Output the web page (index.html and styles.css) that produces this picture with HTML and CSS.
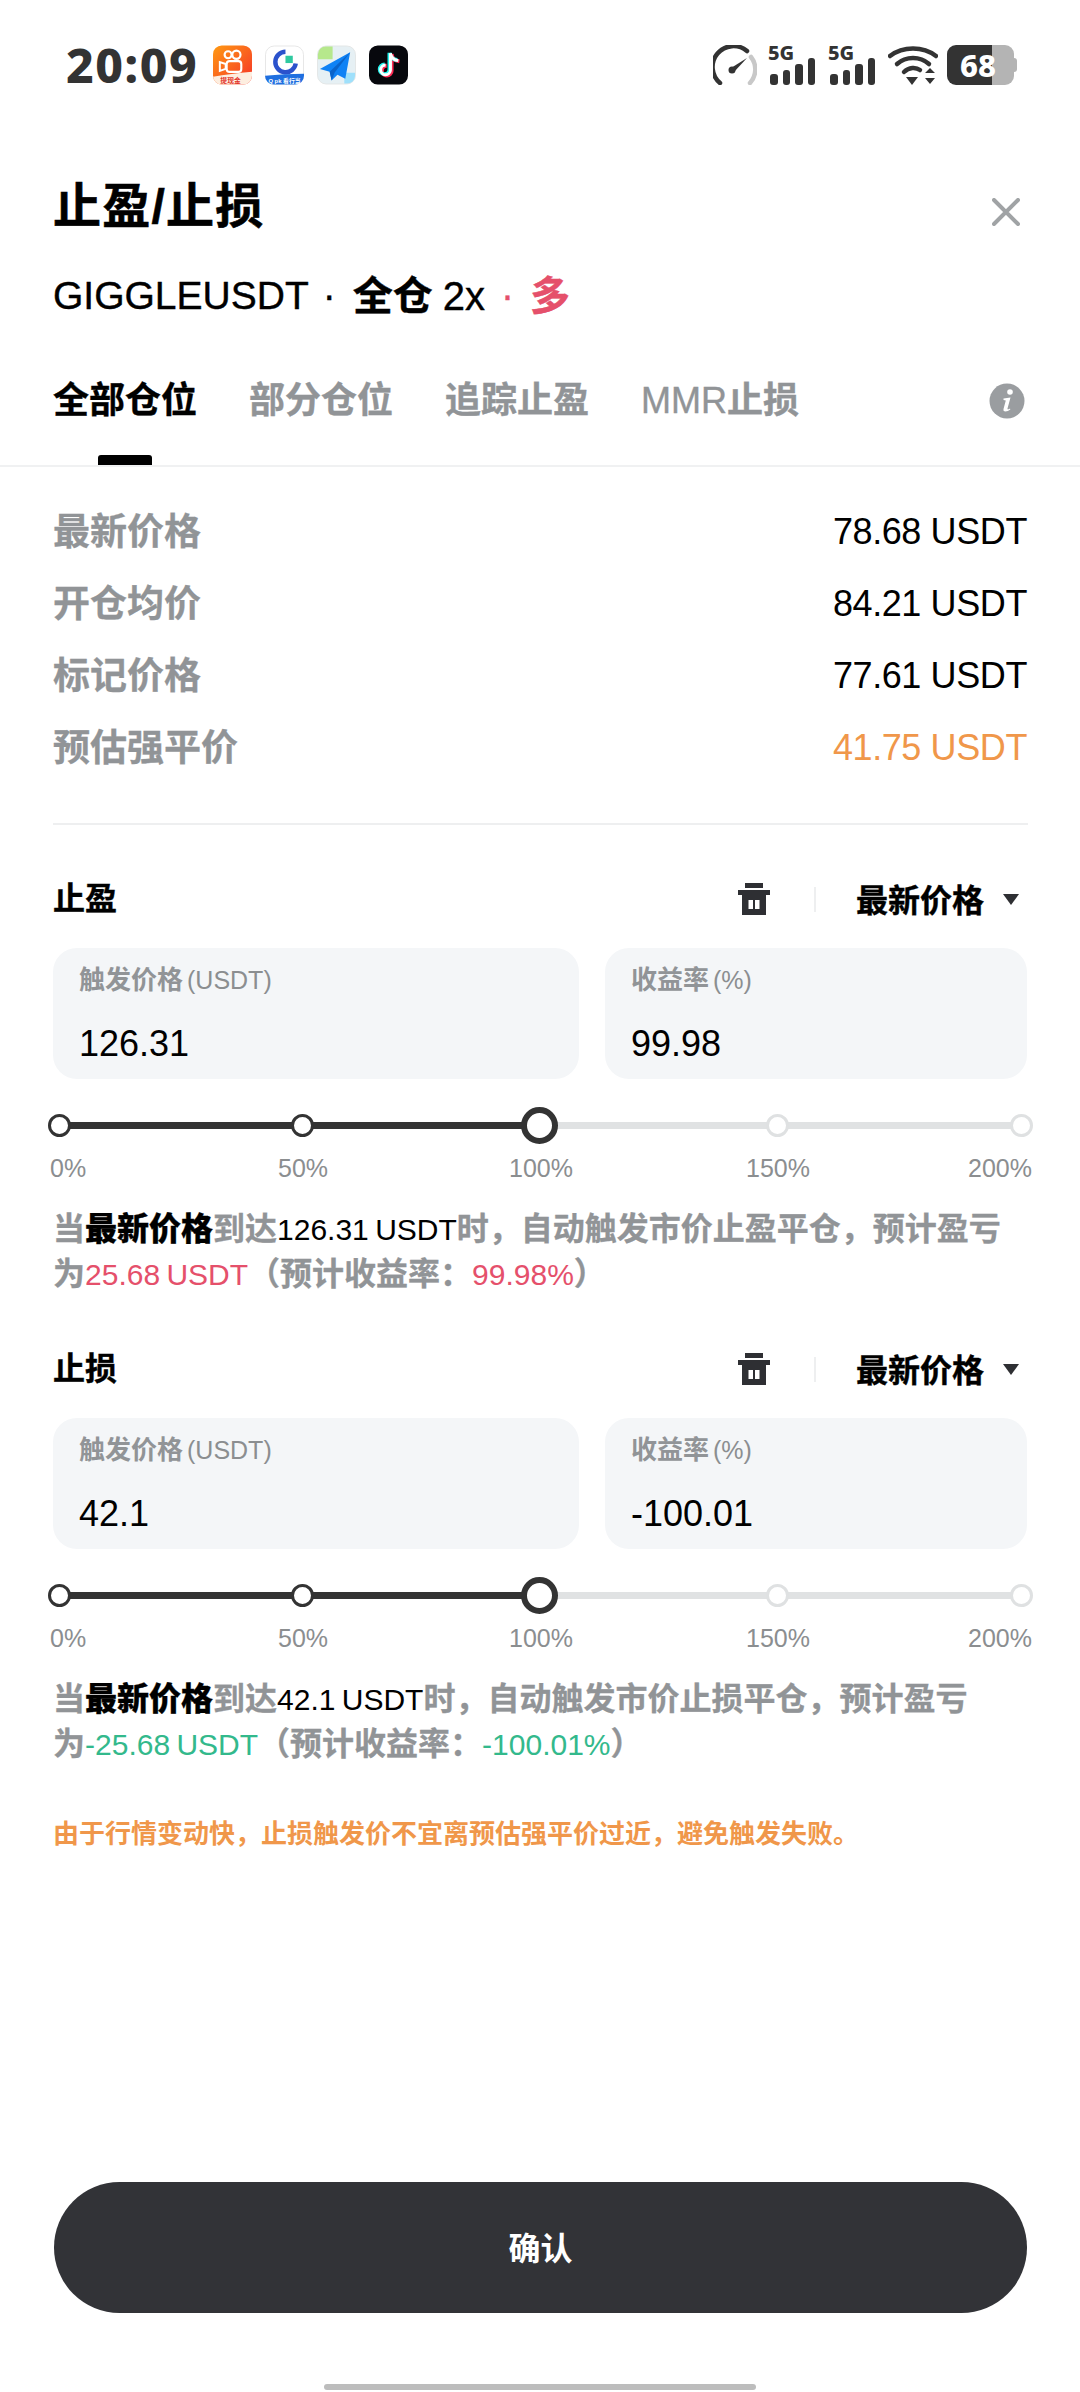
FILE: index.html
```html
<!DOCTYPE html>
<html lang="zh-CN">

<head>
    <meta charset="UTF-8">
    <meta name="viewport" content="width=device-width, initial-scale=1.0">
    <title>止盈/止损</title>
    <link rel="stylesheet" href="styles.css">
</head>

<body>
    <div class="status-bar">
        <div class="status-left">
            <span class="time">20:09</span>
            <svg class="app-icon" viewBox="0 0 40 40">
                <defs>
                    <linearGradient id="ks" x1="0" y1="0" x2="1" y2="1">
                        <stop offset="0" stop-color="#ff9a12" />
                        <stop offset="1" stop-color="#f5302a" />
                    </linearGradient>
                </defs>
                <rect width="40" height="40" rx="9" fill="url(#ks)" />
                <circle cx="15.5" cy="9.5" r="3.6" fill="none" stroke="#fff" stroke-width="2.2" />
                <circle cx="24" cy="9.5" r="4.2" fill="none" stroke="#fff" stroke-width="2.2" />
                <rect x="14" y="16" width="15" height="11" rx="3" fill="none" stroke="#fff" stroke-width="2.2" />
                <path d="M13 19l-6-2v9l6-2z" fill="none" stroke="#fff" stroke-width="2" />
                <path d="M0 32q18 -3 40 -5v4a9 9 0 0 1-9 9H9a9 9 0 0 1-9-9z" fill="#fdeee0" />
                <text x="18" y="38.5" font-size="7" font-weight="700" fill="#e2342a" text-anchor="middle">提现金</text>
            </svg>
            <svg class="app-icon" viewBox="0 0 40 40">
                <rect x=".5" y=".5" width="39" height="39" rx="9" fill="#fff" stroke="#e6e6e6" />
                <path d="M21 6.500a10.500 10.500 0 1 0 10.500 12" fill="none" stroke="#2b52cc" stroke-width="4.600" />
                <rect x="21" y="10.500" width="7.500" height="7.500" fill="#2fc9a0" />
                <path d="M0 31q20 -2 40 -2v2a9 9 0 0 1-9 9H9a9 9 0 0 1-9-9z" fill="#1f6fe0" />
                <text x="20" y="38" font-size="6" font-weight="700" fill="#fff" text-anchor="middle">Q pk 看行当</text>
            </svg>
            <svg class="app-icon" viewBox="0 0 40 40">
                <rect x=".5" y=".5" width="39" height="39" rx="9" fill="#e6f0f4" stroke="#e3e6e6" />
                <path d="M1 9a8 8 0 0 1 8-8h7v13H1z" fill="#b6e88c" />
                <path d="M28 28h11v3a8 8 0 0 1-8 8h-3z" fill="#9fe0fb" />
                <path d="M34 7L3 24l10 3 2 9 6-6 8 4z" fill="#0f82f5" />
                <path d="M34 7L13 27l2 9 3-8z" fill="#0a63c9" />
            </svg>
            <svg class="app-icon" viewBox="0 0 40 40">
                <rect width="40" height="40" rx="9" fill="#07080d" />
                <path d="M22 8v17a5 5 0 1 1-5-5M22 8c.5 4 3.500 7 8 7.500" fill="none" stroke="#ff2c55" stroke-width="4" transform="translate(1.200 .8)" />
                <path d="M22 8v17a5 5 0 1 1-5-5M22 8c.5 4 3.500 7 8 7.500" fill="none" stroke="#25f4ee" stroke-width="4" transform="translate(-1 -.6)" />
                <path d="M22 8v17a5 5 0 1 1-5-5M22 8c.5 4 3.500 7 8 7.500" fill="none" stroke="#fff" stroke-width="3" />
            </svg>
        </div>
        <div class="status-right">
            <svg class="gauge" viewBox="0 0 44 40">
                <path d="M7 38A20 20 0 0 1 34 6" fill="none" stroke="#333" stroke-width="4.500" stroke-linecap="round" />
                <path d="M38 12A20 20 0 0 1 37 38" fill="none" stroke="#c8c8c8" stroke-width="4.500" stroke-linecap="round" />
                <path d="M34 13L21 27l-3-4z" fill="#333" />
                <circle cx="19" cy="25" r="3.500" fill="#333" />
            </svg>
            <div class="signal">
                <span class="signal-label">5G</span>
                <div class="bars"><i class="b1"></i><i class="b2"></i><i class="b3"></i><i class="b4"></i></div>
            </div>
            <div class="signal">
                <span class="signal-label">5G</span>
                <div class="bars"><i class="b1"></i><i class="b2"></i><i class="b3"></i><i class="b4"></i></div>
            </div>
            <svg class="wifi" viewBox="0 0 50 40">
                <path d="M2 11C15 1 35 1 48 11" fill="none" stroke="#333" stroke-width="4.500" stroke-linecap="round" />
                <path d="M9 19C18 11 32 11 41 19" fill="none" stroke="#333" stroke-width="4.500" stroke-linecap="round" />
                <path d="M16 27C21 22 28 22 32 25" fill="none" stroke="#333" stroke-width="4.500" stroke-linecap="round" />
                <path d="M18 32h12l-6 8z" fill="#333" />
                <path d="M37 28l5-5 5 5zM37 33h10l-5 6z" fill="#333" />
            </svg>
            <div class="battery">
                <div class="battery-body"><span>68</span></div>
                <div class="battery-nub"></div>
            </div>
        </div>
    </div>

    <div class="head">
        <div class="title-row">
            <h1>止盈/止损</h1>
            <svg class="close" viewBox="0 0 28 28">
                <path d="M2 2L26 26M26 2L2 26" stroke="#a0a3a5" stroke-width="4" stroke-linecap="round" fill="none" />
            </svg>
        </div>
        <div class="subtitle">
            <span>GIGGLEUSDT</span><span class="dot">·</span><b>全仓</b><span class="lev">2x</span><span class="dot dot-red red">·</span><b class="red">多</b>
        </div>
    </div>

    <div class="tabs">
        <span class="tab active">全部仓位</span>
        <span class="tab">部分仓位</span>
        <span class="tab">追踪止盈</span>
        <span class="tab"><span class="latin">MMR</span>止损</span>
        <svg class="info" viewBox="0 0 36 36">
            <circle cx="18" cy="18" r="17.500" fill="#9a9da0" />
            <circle cx="21" cy="9" r="2.800" fill="#fff" />
            <path d="M14.500 15.500l7-1-3 11c-.3 1 .5 1.300 2.500 0l.3 1c-3 2.500-7.500 3-6.800-.5l2.300-8.500-2.300-.5z" fill="#fff" />
        </svg>
    </div>

    <div class="rows">
        <div class="row"><span class="row-label">最新价格</span><span class="row-value">78.68 USDT</span></div>
        <div class="row"><span class="row-label">开仓均价</span><span class="row-value">84.21 USDT</span></div>
        <div class="row"><span class="row-label">标记价格</span><span class="row-value">77.61 USDT</span></div>
        <div class="row"><span class="row-label">预估强平价</span><span class="row-value orange">41.75 USDT</span></div>
    </div>

    <div class="divider"></div>

    <section class="block">
        <div class="block-head">
            <span class="block-title">止盈</span>
            <svg class="trash" viewBox="0 0 32 32">
                <path d="M7 0h18v5H7zM0 7h32v5H0zM4 12h24v20H4z" fill="#2e2f33" />
                <path d="M10.500 17H15v9h-4.500zM17 17h4.500v9H17z" fill="#fff" />
            </svg>
            <span class="vline"></span>
            <span class="select">最新价格</span>
            <span class="arrow"></span>
        </div>
        <div class="fields">
            <div class="field price">
                <div class="field-label"><b>触发价格</b><span>(USDT)</span></div>
                <div class="field-value">126.31</div>
            </div>
            <div class="field rate">
                <div class="field-label"><b>收益率</b><span>(%)</span></div>
                <div class="field-value">99.98</div>
            </div>
        </div>
        <div class="slider">
            <div class="track"></div>
            <div class="track-on"></div>
            <i class="stop on s0"></i><i class="stop on s50"></i><i class="thumb"></i><i class="stop s150"></i><i class="stop s200"></i>
        </div>
        <div class="ticks"><span>0%</span><span>50%</span><span>100%</span><span>150%</span><span>200%</span></div>
        <p class="note">当<b>最新价格</b>到达<span class="black">126.31 USDT</span>时，自动触发市价止盈平仓，预计盈亏<br>为<span class="red">25.68 USDT</span>（预计收益率：<span class="red">99.98%</span>）</p>
    </section>

    <section class="block">
        <div class="block-head">
            <span class="block-title">止损</span>
            <svg class="trash" viewBox="0 0 32 32">
                <path d="M7 0h18v5H7zM0 7h32v5H0zM4 12h24v20H4z" fill="#2e2f33" />
                <path d="M10.500 17H15v9h-4.500zM17 17h4.500v9H17z" fill="#fff" />
            </svg>
            <span class="vline"></span>
            <span class="select">最新价格</span>
            <span class="arrow"></span>
        </div>
        <div class="fields">
            <div class="field price">
                <div class="field-label"><b>触发价格</b><span>(USDT)</span></div>
                <div class="field-value">42.1</div>
            </div>
            <div class="field rate">
                <div class="field-label"><b>收益率</b><span>(%)</span></div>
                <div class="field-value">-100.01</div>
            </div>
        </div>
        <div class="slider">
            <div class="track"></div>
            <div class="track-on"></div>
            <i class="stop on s0"></i><i class="stop on s50"></i><i class="thumb"></i><i class="stop s150"></i><i class="stop s200"></i>
        </div>
        <div class="ticks"><span>0%</span><span>50%</span><span>100%</span><span>150%</span><span>200%</span></div>
        <p class="note">当<b>最新价格</b>到达<span class="black">42.1 USDT</span>时，自动触发市价止损平仓，预计盈亏<br>为<span class="green">-25.68 USDT</span>（预计收益率：<span class="green">-100.01%</span>）</p>
    </section>

    <p class="warn">由于行情变动快，止损触发价不宜离预估强平价过近，避免触发失败。</p>

    <button class="confirm">确认</button>
    <div class="home-bar"></div>
</body>

</html>
```

FILE: styles.css
```css
* {
    box-sizing: border-box;
}

html,
body {
    margin: 0;
    padding: 0;
}

body {
    width: 1080px;
    height: 2392px;
    overflow: hidden;
    background-color: #fff;
    color: #000;
    font-family: "Liberation Sans", "Noto Sans CJK SC", sans-serif;
    display: flex;
    flex-direction: column;
}

.red {
    color: #e5506b;
}

.green {
    color: #33b98c;
}

.orange {
    color: #f0974a;
}

.black {
    color: #000;
}

/* status bar */
.status-bar {
    height: 130px;
    padding: 45px 63px 0 66px;
    display: flex;
    justify-content: space-between;
    align-items: flex-start;
    flex: none;
}

.status-left {
    display: flex;
    align-items: center;
    height: 40px;
}

.time {
    font-family: "Noto Sans", sans-serif;
    font-size: 48px;
    font-weight: 800;
    color: #333;
    width: 147px;
    line-height: 40px;
    letter-spacing: 1.500px;
}

.app-icon {
    width: 39px;
    height: 40px;
    margin-right: 13px;
}

.status-right {
    display: flex;
    align-items: flex-start;
    height: 40px;
}

.gauge {
    width: 44px;
    height: 40px;
    margin-right: 11px;
}

.signal {
    width: 48px;
    height: 40px;
    margin-right: 12px;
    position: relative;
}

.signal-label {
    position: absolute;
    left: 0;
    top: 0;
    font-family: "Noto Sans", sans-serif;
    font-size: 20px;
    line-height: 16px;
    font-weight: 800;
    color: #333;
}

.bars {
    position: absolute;
    left: 2px;
    bottom: 0;
    display: flex;
    align-items: flex-end;
    gap: 5px;
}

.bars i {
    width: 7.500px;
    background-color: #333;
    border-radius: 3px;
}

.b1 {
    height: 11px;
}

.b2 {
    height: 15px;
}

.b3 {
    height: 21px;
}

.b4 {
    height: 27px;
}

.wifi {
    width: 50px;
    height: 40px;
    margin-right: 9px;
}

.battery {
    display: flex;
    align-items: center;
    height: 40px;
}

.battery-body {
    width: 67px;
    height: 40px;
    border-radius: 9px;
    background: linear-gradient(90deg, #333 0, #333 45px, #b4b4b4 45px, #b4b4b4 100%);
    color: #fff;
    font-family: "Noto Sans", sans-serif;
    font-weight: 800;
    font-size: 31px;
    line-height: 40px;
    padding-left: 13px;
}

.battery-nub {
    width: 3px;
    height: 14px;
    background-color: #b4b4b4;
    border-radius: 0 3px 3px 0;
}

/* header */
.head {
    padding: 0 53px;
    flex: none;
}

.title-row {
    display: flex;
    justify-content: space-between;
    align-items: center;
    height: 80px;
    margin-top: 37px;
    padding-right: 7px;
}

h1 {
    margin: 0;
    font-size: 48px;
    font-weight: 700;
    line-height: 80px;
    letter-spacing: 1.200px;
    -webkit-text-stroke: .6px #000;
}

.close {
    width: 28px;
    height: 28px;
    margin-top: 10px;
}

.subtitle {
    margin-top: 19px;
    height: 60px;
    line-height: 60px;
    font-size: 39px;
    display: flex;
    align-items: center;
    -webkit-text-stroke: .4px;
}

.subtitle b {
    font-size: 40px;
    font-weight: 700;
}

.dot {
    margin: 0 17px 0 14px;
}

.dot-red {
    margin: 0 16px;
}

.lev {
    margin-left: 10px;
    font-size: 40px;
}

/* tabs */
.tabs {
    margin-top: 49px;
    height: 92px;
    padding: 0 54px 0 53px;
    border-bottom: 2px solid #f0f1f2;
    display: flex;
    align-items: flex-start;
    gap: 52px;
    flex: none;
    font-size: 36px;
    font-weight: 700;
    color: #919497;
    line-height: 52px;
    -webkit-text-stroke: .4px;
}

.tab {
    height: 90px;
    position: relative;
}

.tab .latin {
    font-weight: 400;
}

.tab.active {
    color: #000;
}

.tab.active::after {
    content: "";
    position: absolute;
    left: 45px;
    bottom: 0;
    width: 54px;
    height: 10px;
    background-color: #000;
    border-radius: 3px 3px 0 0;
}

.info {
    width: 36px;
    height: 36px;
    margin-left: auto;
    margin-top: 8px;
    margin-right: 1px;
}

/* price rows */
.rows {
    margin-top: 26px;
    padding: 0 53px;
    flex: none;
}

.row {
    height: 72px;
    display: flex;
    justify-content: space-between;
    align-items: center;
    font-size: 36px;
}

.row-label {
    font-size: 37px;
    font-weight: 700;
    color: #919497;
    -webkit-text-stroke: .3px;
}

.row-value {
    padding-top: 6px;
    letter-spacing: -.4px;
}

.divider {
    margin: 42px 52px 0 53px;
    height: 2px;
    background-color: #eeeff0;
    flex: none;
}

/* tp / sl block */
.block {
    padding: 0 53px;
    height: 470px;
    flex: none;
}

.block:first-of-type {
    margin-top: 43px;
}

.block-head {
    height: 62px;
    display: flex;
    align-items: center;
}

.block-title {
    font-size: 32px;
    font-weight: 700;
    flex: 1;
    line-height: 62px;
    -webkit-text-stroke: .4px;
}

.trash {
    width: 32px;
    height: 32px;
}

.vline {
    width: 2px;
    height: 25px;
    background-color: #eeeff0;
    margin: 0 40px 0 44px;
}

.select {
    font-size: 32px;
    font-weight: 700;
    margin-bottom: 3px;
    -webkit-text-stroke: .4px;
}

.arrow {
    width: 0;
    height: 0;
    margin-left: 19px;
    margin-right: 8px;
    border-left: 8px solid transparent;
    border-right: 8px solid transparent;
    border-top: 11px solid #2e2f33;
}

.fields {
    margin-top: 18px;
    display: flex;
    gap: 26px;
}

.field {
    height: 131px;
    background-color: #f4f6f8;
    border-radius: 24px;
    padding: 16px 26px 0;
}

.price {
    width: 526px;
}

.rate {
    width: 422px;
}

.field-label {
    font-size: 25px;
    line-height: 32px;
    color: #8b8e90;
}

.field-label b {
    font-size: 26px;
    font-weight: 700;
    color: #919497;
    margin-right: 4px;
}

.field-value {
    margin-top: 23px;
    font-size: 36px;
    line-height: 50px;
}

.slider {
    height: 36px;
    margin-top: 28px;
    position: relative;
}

.track,
.track-on {
    position: absolute;
    top: 15px;
    left: 4px;
    height: 7px;
    background-color: #e0e2e3;
}

.track {
    right: 6px;
}

.track-on {
    width: 482px;
    background-color: #333;
}

.stop {
    position: absolute;
    top: 7px;
    width: 23px;
    height: 23px;
    border-radius: 50%;
    background-color: #fff;
    border: 3px solid #dfe1e2;
}

.stop.on {
    border-color: #333;
}

.s0 {
    left: -5px;
}

.s50 {
    left: 238px;
}

.s150 {
    left: 713px;
}

.s200 {
    left: 957px;
}

.thumb {
    position: absolute;
    left: 468px;
    top: 0;
    width: 37px;
    height: 37px;
    border-radius: 50%;
    background-color: #fff;
    border: 6px solid #333;
}

/* ticks are not evenly spread, so the columns carry the offsets */
.ticks {
    margin: 9px 0 0 -3px;
    display: grid;
    grid-template-columns: 228px 231px 237px 222px auto;
    font-size: 25px;
    line-height: 32px;
    color: #8b8e90;
}

.note {
    margin: 23px 0 0;
    font-size: 32px;
    line-height: 45px;
    color: #919497;
    font-weight: 700;
    white-space: nowrap;
    -webkit-text-stroke: .3px;
}

.note b {
    color: #000;
}

.note span {
    font-weight: 400;
    font-size: 30px;
    word-spacing: -2px;
    -webkit-text-stroke: 0;
}

.warn {
    margin: 6px 0 0;
    padding: 0 53px;
    font-size: 26px;
    line-height: 40px;
    font-weight: 700;
    color: #f0974a;
    flex: none;
}

.confirm {
    margin: auto 53px 0 54px;
    height: 131px;
    border: none;
    border-radius: 66px;
    background-color: #323337;
    color: #fff;
    font-family: inherit;
    font-size: 32px;
    font-weight: 700;
    padding-bottom: 5px;
    flex: none;
}

.home-bar {
    width: 432px;
    height: 6px;
    margin: 71px auto 2px;
    background-color: #bdbdbd;
    border-radius: 3px;
    flex: none;
}
```
